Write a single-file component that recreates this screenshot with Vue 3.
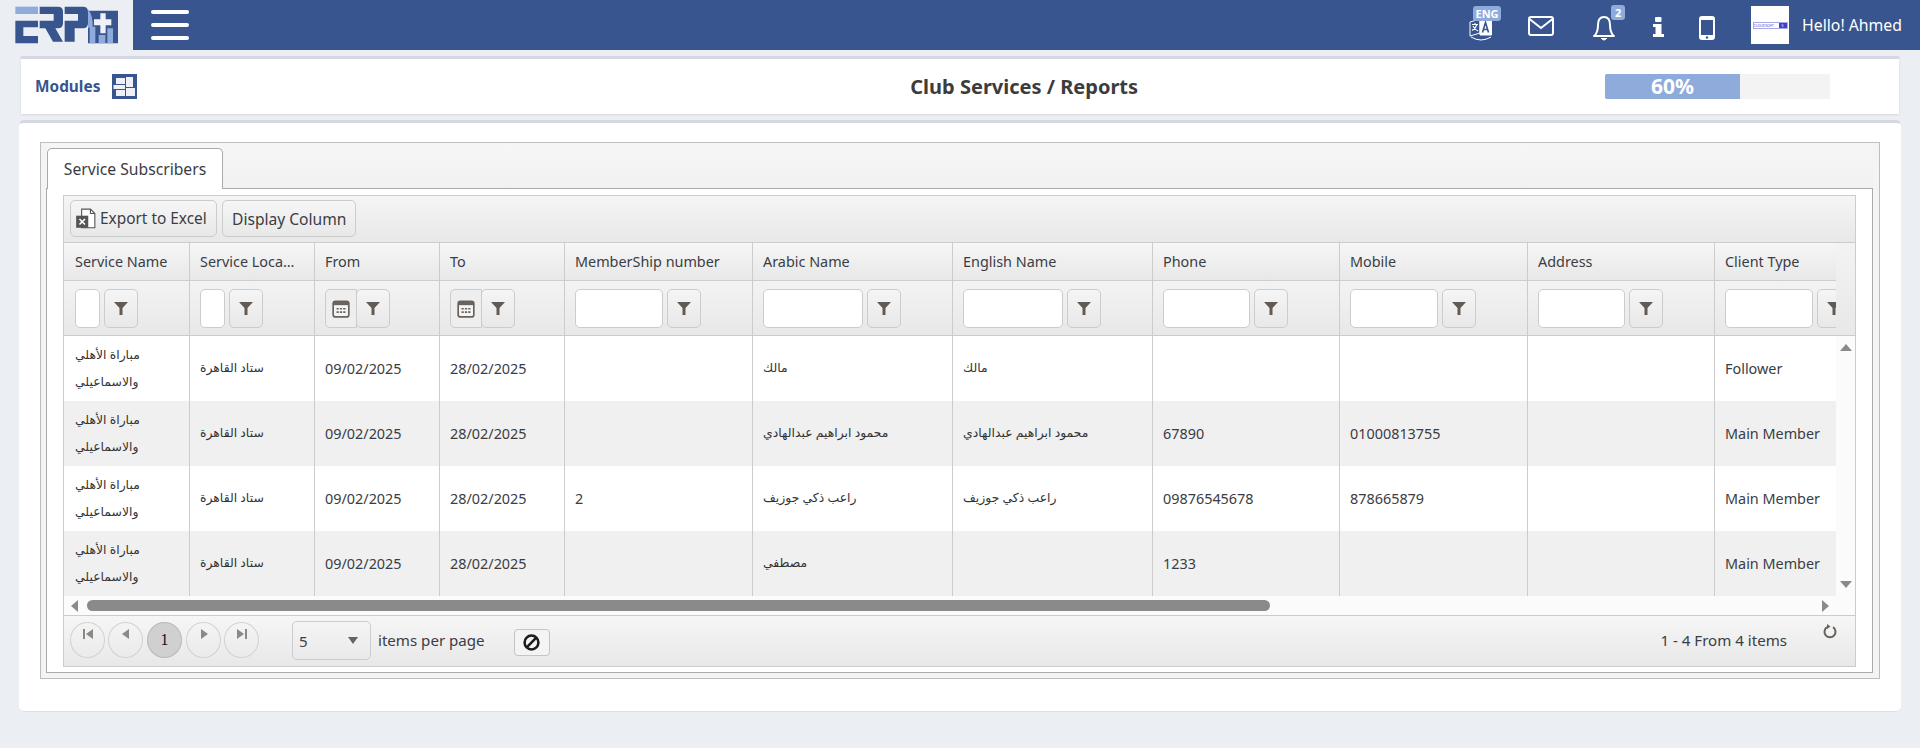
<script setup>
const columns = [
  { title: 'Service Name', w: 126 },
  { title: 'Service Loca…', w: 125 },
  { title: 'From', w: 125, date: true },
  { title: 'To', w: 125, date: true },
  { title: 'MemberShip number', w: 188 },
  { title: 'Arabic Name', w: 200 },
  { title: 'English Name', w: 200 },
  { title: 'Phone', w: 187 },
  { title: 'Mobile', w: 188 },
  { title: 'Address', w: 187 },
  { title: 'Client Type', w: 188 }
]
const game = 'مباراة الأهلي والاسماعيلي'
const place = 'ستاد القاهرة'
const rows = [
  [game, place, '09/02/2025', '28/02/2025', '', 'مالك', 'مالك', '', '', '', 'Follower'],
  [game, place, '09/02/2025', '28/02/2025', '', 'محمود ابراهيم عبدالهادي', 'محمود ابراهيم عبدالهادي', '67890', '01000813755', '', 'Main Member'],
  [game, place, '09/02/2025', '28/02/2025', '2', 'راعب ذكي جوزيف', 'راعب ذكي جوزيف', '09876545678', '878665879', '', 'Main Member'],
  [game, place, '09/02/2025', '28/02/2025', '', 'مصطفي', '', '1233', '', '', 'Main Member']
]
const isArabic = (v) => /[\u0600-\u06FF]/.test(v)
</script>

<template>
  <div class="page">
    <header class="topbar">
      <div class="brand">
        <svg width="120" height="50" viewBox="0 0 360 150">
          <path d="M22 20h68v22H22z" fill="#8fabdc" />
          <path d="M22 62h68v20H46v26h44v22H22z" fill="#38558f" />
          <path d="M95 20h55q15 0 15 15v35q0 15-15 15h-8l23 40h-30l-23-40H95V62h42V42H95z" fill="#38558f" />
          <path d="M170 20h55q15 0 15 15v35q0 15-15 15h-25v40h-30V62h40V42h-40z" fill="#38558f" />
          <path d="M240 32h90v98h-90z" fill="#38558f" />
          <path d="M240 28q16 20 14 55h-14zM245 80h17v50h-17zM272 105h20v25h-20zM298 85h17v45h-17z" fill="#8fabdc" />
          <path d="M277 40h16v18h17v18h-17v24h-16V76h-19V58h19z" fill="#eef1f7" />
        </svg>
      </div>
      <div class="bar">
        <div class="burger"><i></i><i></i><i></i></div>
        <div class="tools">
          <span class="tool lang">
            <svg width="24" height="26" viewBox="0 0 24 26" fill="none" stroke="#fff">
              <path d="M11 4 1 7v14l10-3z" stroke-width="1" />
              <path d="M11 4h11.500v16H11z" fill="#fff" stroke-width="1" />
              <path d="M3 9.500h6M6 8v1.500M8 9.500c-1 3-3 5-5 6M4 11c1 2 3 4 5 5" stroke-width="1.100" />
              <path d="m13.500 17.500 3-10 3 10M14.500 14.500h4" stroke="#38558f" stroke-width="1.600" />
              <path d="M2 22q10 6 20 0" stroke-width="1" />
            </svg>
            <b class="badge eng">ENG</b>
          </span>
          <svg class="tool mail" width="26" height="20" viewBox="0 0 26 20" fill="none" stroke="#fff" stroke-width="2">
            <rect x="1" y="1" width="24" height="18" rx="2" />
            <path d="m1.500 3 11.500 9L24.500 3" />
          </svg>
          <span class="tool bell">
            <svg width="24" height="25" viewBox="0 0 24 25" fill="none" stroke="#fff" stroke-width="2">
              <path d="M2 20q4-3 4-11 0-8 6-8t6 8q0 8 4 11z" stroke-linejoin="round" />
              <path d="M9 22q3 4 6 0" fill="#fff" stroke-width="1" />
            </svg>
            <b class="badge two">2</b>
          </span>
          <svg class="tool info" width="11" height="20" viewBox="0 0 11 20" fill="#fff">
            <rect x="2" y="0" width="6.500" height="5" rx="1" />
            <path d="M0 7h8.500v10H11v3H0v-3h2.500v-7H0z" />
          </svg>
          <svg class="tool phone" width="16" height="24" viewBox="0 0 16 24" fill="#fff">
            <path fill-rule="evenodd" d="M3 0h10q3 0 3 3v18q0 3-3 3H3q-3 0-3-3V3q0-3 3-3zM2 4v15h12V4z" />
            <circle cx="8" cy="21.500" r="1.200" fill="#38558f" />
          </svg>
          <span class="avatar">
            <span class="cs"><em>CLOUDSOFT</em><u>S</u></span>
          </span>
          <span class="hello">Hello! Ahmed</span>
        </div>
      </div>
    </header>

    <section class="modules">
      <div class="mod-left">
        <b>Modules</b>
        <svg width="25" height="25" viewBox="0 0 25 25">
          <rect width="25" height="25" fill="#38558f" />
          <path d="M4 4h9v6H4zM14 3h7v10h-7zM1.500 11H13v4H1.500zM14 14h9v8h-9zM4 16h9v6H4z" fill="#eef1f7" />
        </svg>
      </div>
      <h1>Club Services / Reports</h1>
      <div class="progress"><div class="fill">60%</div></div>
    </section>

    <main class="card">
      <div class="frame">
        <div class="tabs"><div class="tab">Service Subscribers</div></div>
        <div class="content">
          <div class="grid">
            <div class="toolbar">
              <button class="btn">
                <svg width="21" height="22" viewBox="0 0 19 20" fill="none">
                  <path d="M6 1h8l4 4v13H6z" fill="#fff" stroke="#555" />
                  <path d="M14 1v4h4" stroke="#555" />
                  <rect x="1" y="7" width="11" height="11" fill="#555" />
                  <path d="m4 10 5 5M9 10l-5 5" stroke="#fff" stroke-width="1.500" />
                </svg>
                Export to Excel
              </button>
              <button class="btn">Display Column</button>
            </div>
            <div class="viewport">
              <div class="main">
                <div class="clip">
                  <table>
                    <colgroup>
                      <col v-for="c in columns" :key="c.title" :style="{ width: c.w + 'px' }" />
                    </colgroup>
                    <thead>
                      <tr class="titles">
                        <th v-for="c in columns" :key="c.title">{{ c.title }}</th>
                      </tr>
                      <tr class="filters">
                        <th v-for="c in columns" :key="c.title">
                          <div class="filter">
                            <span v-if="c.date" class="picker">
                              <svg width="18" height="19" viewBox="0 0 16 17" fill="none">
                                <rect x="1" y="2" width="14" height="14" rx="2" fill="#f4f4f4" stroke="#6a625c" stroke-width="1.500" />
                                <rect x="1" y="2" width="14" height="3.500" fill="#6a625c" />
                                <path d="M4 8h2v1.500H4zM7 8h2v1.500H7zM10 8h2v1.500h-2zM4 11h2v1.500H4zM7 11h2v1.500H7zM10 11h2v1.500h-2z" fill="#6a625c" />
                              </svg>
                            </span>
                            <span v-else class="input"></span>
                            <span class="fbtn">
                              <svg width="14" height="14" viewBox="0 0 14 14"><path d="M0 1h14L8.500 7v7h-3V7z" fill="#625b55" /></svg>
                            </span>
                          </div>
                        </th>
                      </tr>
                    </thead>
                    <tbody>
                      <tr v-for="(r, i) in rows" :key="i">
                        <td v-for="(v, j) in r" :key="j" :class="{ ar: isArabic(v) }">{{ v }}</td>
                      </tr>
                    </tbody>
                  </table>
                </div>
              </div>
              <div class="vscroll">
                <div class="vhead"></div>
                <div class="vtrack"><i class="up"></i><i class="down"></i></div>
              </div>
            </div>
            <div class="hscroll">
              <i class="left"></i>
              <div class="track"><div class="thumb"></div></div>
              <i class="right"></i>
            </div>
            <div class="pager">
              <span class="circle">
                <svg width="12" height="10" viewBox="0 0 12 10"><path d="M1 0h2v10H1zM11 0v10L4 5z" fill="#8c8884" /></svg>
              </span>
              <span class="circle">
                <svg width="8" height="10" viewBox="0 0 8 10"><path d="M7 0v10L0 5z" fill="#8c8884" /></svg>
              </span>
              <span class="circle on">1</span>
              <span class="circle">
                <svg width="8" height="10" viewBox="0 0 8 10"><path d="M1 0v10l7-5z" fill="#8c8884" /></svg>
              </span>
              <span class="circle">
                <svg width="12" height="10" viewBox="0 0 12 10"><path d="M1 0v10l7-5zM9 0h2v10H9z" fill="#8c8884" /></svg>
              </span>
              <span class="select"><span>5</span><i></i></span>
              <span class="ipp">items per page</span>
              <span class="cancel">
                <svg width="17" height="17" viewBox="0 0 16 16" fill="none" stroke="#1c1c1c" stroke-width="2.400">
                  <circle cx="8" cy="8" r="6.500" /><path d="M12.500 3.500 3.500 12.500" />
                </svg>
              </span>
              <span class="count">1 - 4 From 4 items</span>
              <svg class="refresh" width="14" height="15" viewBox="0 0 14 15" fill="none" stroke="#68625d" stroke-width="2">
                <path d="M4 3.200a5.500 5.500 0 1 0 6 0" />
                <path d="M4 0v5l3.500-2.500z" fill="#68625d" stroke="none" />
              </svg>
            </div>
          </div>
        </div>
      </div>
    </main>
  </div>
</template>

<style>
html, body { margin: 0; background: #ebeef3; }
</style>

<style scoped>
.page {
  height: 748px;
  overflow: hidden;
  font-family: "Noto Sans", "DejaVu Sans", sans-serif;
  font-size: 14.400px;
  color: #3a3d44;
  background: #ebeef3;
}
.topbar { display: flex; height: 50px; }
.brand { width: 133px; padding-left: 8px; box-sizing: border-box; }
.bar { flex: 1; display: flex; align-items: center; justify-content: space-between; background: #38558f; color: #fff; }
.burger { display: flex; flex-direction: column; gap: 9px; margin: 0 0 0 18px; width: 38px; }
.burger i { display: block; height: 4px; background: #fff; border-radius: 2px; }
.tools { display: flex; align-items: center; }
.tool { display: block; position: relative; flex: none; }
.lang { width: 24px; height: 26px; margin-right: 35px; top: 3px; }
.mail { margin-right: 38px; top: 1px; }
.bell { width: 24px; height: 25px; margin-right: 37px; top: 3px; }
.info { margin-right: 35px; top: 2px; }
.phone { margin-right: 36px; top: 3px; }
.badge { position: absolute; background: #8fabdc; color: #fff; border-radius: 3px; font-size: 11px; line-height: 15px; text-align: center; font-weight: 700; }
.eng { left: 4px; top: -9px; width: 28px; }
.two { left: 19px; top: -11px; width: 14px; }
.avatar { display: flex; align-items: center; justify-content: center; width: 38px; height: 38px; background: #fff; }
.cs { display: flex; align-items: stretch; height: 7px; width: 35px; border: 1px solid #a7a9ee; box-sizing: border-box; font-size: 3.500px; line-height: 5px; color: #3f42c4; }
.cs em { flex: 1; font-style: normal; overflow: hidden; white-space: nowrap; }
.cs u { width: 8px; background: #3f42c4; color: #fff; text-decoration: none; text-align: center; }
.hello { margin: 0 18px 0 13px; font-size: 15.800px; }

.modules { display: flex; align-items: center; height: 58px; box-sizing: border-box; margin: 6px 21px 0; background: #fff; border-top: 3px solid #d4d7e2; box-shadow: 0 1px 2px #d7d9e0; }
.mod-left { display: flex; align-items: center; gap: 12px; margin-left: 14px; color: #38558f; font-size: 15.400px; }
.modules h1 { flex: 1; margin: 0; padding-left: 306px; text-align: center; font-size: 20px; font-weight: 700; color: #3c3c3c; }
.progress { flex: none; width: 225px; height: 25px; margin-right: 69px; background: #f3f3f3; }
.fill { width: 60%; height: 100%; background: #8fabdc; color: #fff; font-size: 21px; font-weight: 700; line-height: 25px; text-align: center; border-radius: 2px 0 0 2px; }

.card { margin: 6px 19px 0; height: 592px; box-sizing: border-box; background: #fff; border-top: 3px solid #d4d7e2; border-bottom: 1px solid #dcdfe6; border-radius: 5px; padding: 19px 21px 0; }
.frame { height: 537px; box-sizing: border-box; border: 1px solid #bdbdbd; background: #f4f4f4; padding: 0 6px 5px 5px; display: flex; flex-direction: column; }
.tabs { height: 46px; flex: none; display: flex; align-items: flex-end; padding-left: 1px; border-bottom: 1px solid #aaa; box-sizing: border-box; background: linear-gradient(#f6f6f6, #f1f1f1); }
.tab { position: relative; top: 1px; height: 41px; width: 176px; box-sizing: border-box; border: 1px solid #aaa; border-bottom: none; border-radius: 5px 5px 0 0; background: #fff; font-size: 15.700px; line-height: 40px; text-align: center; }
.content { flex: 1; background: #fff; border: 1px solid #aaa; border-top: none; padding: 6px 16px 5px; display: flex; min-height: 0; }
.grid { flex: 1; min-width: 0; border: 1px solid #ccc; display: flex; flex-direction: column; }

.toolbar { height: 47px; flex: none; box-sizing: border-box; display: flex; gap: 5px; align-items: flex-start; padding: 4px 0 0 6px; background: linear-gradient(#f5f5f5, #e9e8e9); border-bottom: 1px solid #ccc; }
.btn { display: flex; align-items: center; gap: 4px; height: 37px; width: 147px; padding: 0 0 0 4px; box-sizing: border-box; border: 1px solid #ccc; border-radius: 5px; background: linear-gradient(#f6f6f6, #e9e8e9); font: inherit; font-size: 15.400px; color: #3a3d44; white-space: nowrap; }
.btn:last-child { width: 134px; padding: 0 0 0 9px; font-size: 15.600px; }

.viewport { flex: none; display: flex; height: 353px; }
.main { flex: 1; min-width: 0; }
.clip { overflow: hidden; height: 100%; }
table { table-layout: fixed; border-collapse: separate; border-spacing: 0; width: 1839px; }
th { font-weight: 400; text-align: left; border-right: 1px solid #ccc; border-bottom: 1px solid #ccc; padding: 0; box-sizing: border-box; }
.titles th { height: 38px; padding: 0 10px; background: linear-gradient(#f6f6f6, #e9e8e9); white-space: nowrap; overflow: hidden; }
.titles th:first-child { padding-left: 11px; }
.filters th { height: 55px; background: linear-gradient(#f3f3f3, #e9e8e9); overflow: hidden; }
.filter { display: flex; align-items: center; padding: 0 51px 0 10px; }
.filters th:first-child .filter { padding-left: 11px; }
.input { flex: 1; min-width: 0; height: 39px; box-sizing: border-box; background: #fff; border: 1px solid #ccc; border-radius: 5px; margin-right: 4px; }
.picker { width: 32px; height: 39px; flex: none; box-sizing: border-box; display: flex; align-items: center; justify-content: center; border: 1px solid #ccc; border-radius: 5px 0 0 5px; background: #eeeeee; margin-right: -1px; }
.fbtn { flex: none; width: 34px; height: 39px; box-sizing: border-box; display: flex; align-items: center; justify-content: center; border: 1px solid #ccc; border-radius: 5px; background: linear-gradient(#f5f5f5, #e9e8e9); }
td { height: 65px; padding: 0 10px; box-sizing: border-box; border-right: 1px solid #ccc; line-height: 27px; vertical-align: middle; }
td:first-child { padding-left: 11px; }
td.ar { font-size: 12.400px; color: #333; padding-bottom: 2px; }
tbody tr:nth-child(even) td { background: #f0f0f0; }
.vscroll { width: 19px; flex: none; display: flex; flex-direction: column; background: #fbfbfb; }
.vhead { height: 93px; flex: none; background: linear-gradient(#f3f3f3, #e9e8e9); border-bottom: 1px solid #ccc; box-sizing: border-box; }
.vtrack { flex: 1; display: flex; flex-direction: column; justify-content: space-between; align-items: center; padding: 8px 0 8px; }
.up { border: 6.500px solid transparent; border-top: none; border-bottom: 7px solid #8a8a8a; }
.down { border: 6.500px solid transparent; border-bottom: none; border-top: 7px solid #8a8a8a; }

.hscroll { height: 20px; flex: none; box-sizing: border-box; display: flex; align-items: center; background: #fbfbfb; border-bottom: 1px solid #ccc; padding: 0 26px 0 7px; }
.left { border: 6.500px solid transparent; border-left: none; border-right: 7px solid #8a8a8a; }
.right { border: 6.500px solid transparent; border-right: none; border-left: 7px solid #8a8a8a; }
.track { flex: 1; padding: 0 0 0 9px; }
.thumb { width: 1183px; height: 11px; border-radius: 6px; background: #8a8a8a; }

.pager { flex: 1; min-height: 0; display: flex; align-items: flex-start; padding: 6px 0 0 6px; background: linear-gradient(#f6f6f6, #e9e8e9); font-size: 15.100px; }
.circle { width: 35px; height: 36px; margin-right: 3px; box-sizing: border-box; border: 1px solid #d2d2d2; border-radius: 50%; display: flex; align-items: flex-start; justify-content: center; padding-top: 6px; }
.circle.on { align-items: center; padding: 0; background: #d0d0d0; border-color: #b8b8b8; color: #111; font-family: "Liberation Serif", serif; font-size: 16px; margin-left: 1px; margin-right: 4px; }
.select { width: 79px; height: 39px; margin: -1px 0 0 30px; box-sizing: border-box; border: 1px solid #ccc; border-radius: 5px; display: flex; align-items: center; justify-content: space-between; padding: 0 12px 0 6px; }
.select i { border: 5.500px solid transparent; border-bottom: none; border-top: 7px solid #6a625c; width: 0; }
.ipp { margin-left: 7px; line-height: 36px; }
.cancel { width: 36px; height: 27px; margin: 7px 0 0 29px; box-sizing: border-box; border: 1px solid #c4c4c4; border-radius: 4px; background: #f4f4f4; display: flex; align-items: center; justify-content: center; }
.count { margin-left: auto; line-height: 36px; margin-right: 36px; }
.refresh { margin: 2px 18px 0 0; }
</style>
